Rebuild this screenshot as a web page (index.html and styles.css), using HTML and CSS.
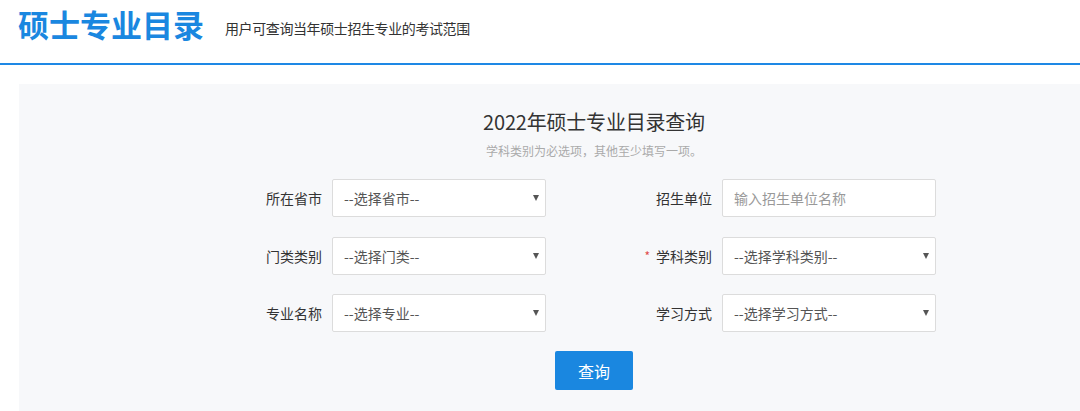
FILE: index.html
```html
<!DOCTYPE html>
<html lang="zh-CN">
<head>
<meta charset="utf-8">
<title>硕士专业目录</title>
<link rel="stylesheet" href="styles.css">
</head>
<body>
<header class="header">
  <h1 class="title">硕士专业目录</h1>
  <span class="subtitle">用户可查询当年硕士招生专业的考试范围</span>
</header>
<main class="panel">
  <div class="intro">
    <h2 class="heading">2022年硕士专业目录查询</h2>
    <p class="hint">学科类别为必选项，其他至少填写一项。</p>
  </div>
  <form class="form">
    <div class="field">
      <label class="label">所在省市</label>
      <div class="select"><select><option>--选择省市--</option></select></div>
    </div>
    <div class="field">
      <label class="label">招生单位</label>
      <input class="input" type="text" placeholder="输入招生单位名称">
    </div>
    <div class="field">
      <label class="label">门类类别</label>
      <div class="select"><select><option>--选择门类--</option></select></div>
    </div>
    <div class="field">
      <label class="label"><span class="req">*</span>学科类别</label>
      <div class="select"><select><option>--选择学科类别--</option></select></div>
    </div>
    <div class="field">
      <label class="label">专业名称</label>
      <div class="select"><select><option>--选择专业--</option></select></div>
    </div>
    <div class="field">
      <label class="label">学习方式</label>
      <div class="select"><select><option>--选择学习方式--</option></select></div>
    </div>
  </form>
  <div class="actions"><button class="btn" type="button">查询</button></div>
</main>
</body>
</html>
```
FILE: styles.css
```css
* { box-sizing: border-box; }
html, body { margin: 0; padding: 0; }
body {
  background: #fff;
  font-family: "Noto Sans CJK SC", "Noto Sans", "Liberation Sans", sans-serif;
  color: #333;
  overflow: hidden;
}
.header {
  height: 65px;
  border-bottom: 2px solid #1e88e5;
  display: flex;
  align-items: flex-start;
  padding-left: 18px;
}
.title {
  margin: 0;
  margin-top: 4px;
  font-size: 31px;
  line-height: 40px;
  font-weight: 700;
  color: #1a87e0;
}
.subtitle {
  margin-left: 21px;
  margin-top: 18px;
  font-size: 14px;
  line-height: 20px;
  letter-spacing: -0.4px;
  color: #333;
}
.panel {
  margin-top: 19px;
  margin-left: 19px;
  height: 330px;
  background: #f7f8fa;
  padding-top: 24px;
}
.intro {
  padding-left: 89px;
  text-align: center;
}
.heading {
  margin: 0;
  font-size: 20px;
  line-height: 28px;
  font-weight: 400;
  letter-spacing: -0.2px;
  color: #333;
}
.hint {
  margin: 6px 0 0;
  font-size: 12px;
  line-height: 18px;
  color: #aaa;
}
.form {
  margin: 19px 0 0 203px;
  display: grid;
  grid-template-columns: 324px 324px;
  column-gap: 66px;
  row-gap: 19.5px;
}
.field {
  display: flex;
  align-items: center;
  gap: 10px;
}
.label {
  width: 100px;
  text-align: right;
  font-size: 14px;
  color: #333;
}
.req {
  color: #e04b4b;
  font-size: 12px;
  margin-right: 6px;
  position: relative;
  top: -1px;
}
.select {
  position: relative;
  width: 214px;
  height: 38px;
}
.select select {
  appearance: none;
  -webkit-appearance: none;
  width: 100%;
  height: 100%;
  border: 1px solid #dcdcdc;
  border-radius: 2px;
  background: #fff;
  padding: 0 24px 0 11px;
  font-family: inherit;
  font-size: 14px;
  color: #555;
  outline: none;
}
.select::after {
  content: "";
  position: absolute;
  right: 7px;
  top: 16px;
  border-left: 3px solid transparent;
  border-right: 3px solid transparent;
  border-top: 6px solid #555;
  pointer-events: none;
}
.input {
  width: 214px;
  height: 38px;
  border: 1px solid #dcdcdc;
  border-radius: 2px;
  background: #fff;
  padding: 0 11px;
  font-family: inherit;
  font-size: 14px;
  color: #555;
  outline: none;
}
.input::placeholder { color: #999; }
.actions {
  display: flex;
  margin-top: 19px;
  padding-left: 536px;
}
.btn {
  width: 78px;
  height: 39px;
  border: none;
  border-radius: 2px;
  background: #1a87e0;
  color: #fff;
  font-family: inherit;
  font-size: 16px;
  cursor: pointer;
}
```
